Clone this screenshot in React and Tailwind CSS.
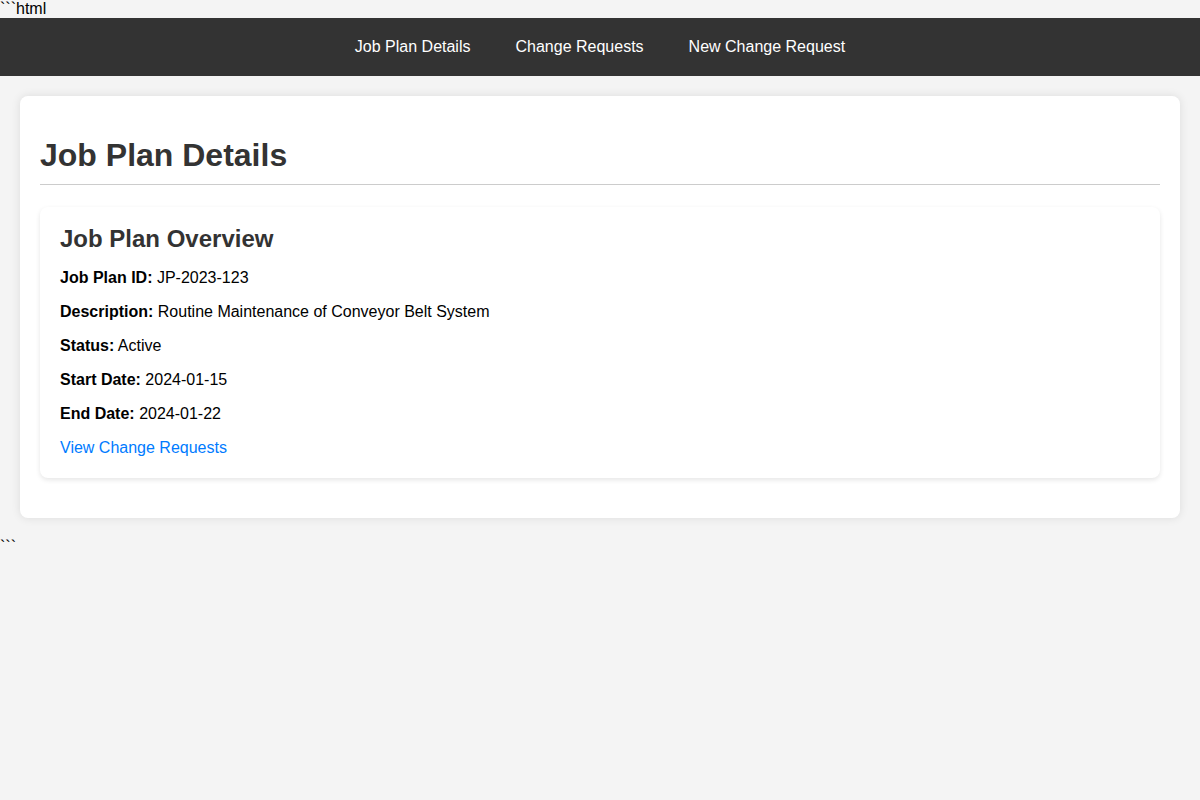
export default function App() {
  const rows = [
    ["Job Plan ID:", "JP-2023-123"],
    ["Description:", "Routine Maintenance of Conveyor Belt System"],
    ["Status:", "Active"],
    ["Start Date:", "2024-01-15"],
    ["End Date:", "2024-01-22"],
  ];
  return (
    <div className="min-h-[800px] bg-[#f4f4f4] text-black text-[16px] leading-[18px]" style={{ fontFamily: '"Liberation Sans", Arial, sans-serif' }}>
      <div className="h-[18px]">```html</div>
      <nav className="h-[58px] bg-[#333333] flex items-center justify-center gap-[45px] text-white">
        <a href="#" className="text-white">Job Plan Details</a>
        <a href="#" className="text-white">Change Requests</a>
        <a href="#" className="text-white">New Change Request</a>
      </nav>
      <div className="m-5 p-5 bg-white rounded-lg shadow-[0_0_10px_rgba(0,0,0,0.1)]">
        <h1 className="mt-[21px] mb-[22px] pb-[10px] border-b border-[#cccccc] text-[32px] leading-[37px] font-bold text-[#333333]">
          Job Plan Details
        </h1>
        <div className="mb-5 bg-white rounded-lg shadow-[0_2px_5px_rgba(0,0,0,0.1)] pt-[18px] pb-[21px] px-5">
          <h2 className="text-[24px] leading-[28px] font-bold text-[#333333] mb-4">Job Plan Overview</h2>
          {rows.map(([k, v]) => (
            <p key={k} className="mb-4">
              <strong className="font-bold">{k}</strong> {v}
            </p>
          ))}
          <a href="#" className="text-[#007bff]">View Change Requests</a>
        </div>
      </div>
      <div>```</div>
    </div>
  );
}
